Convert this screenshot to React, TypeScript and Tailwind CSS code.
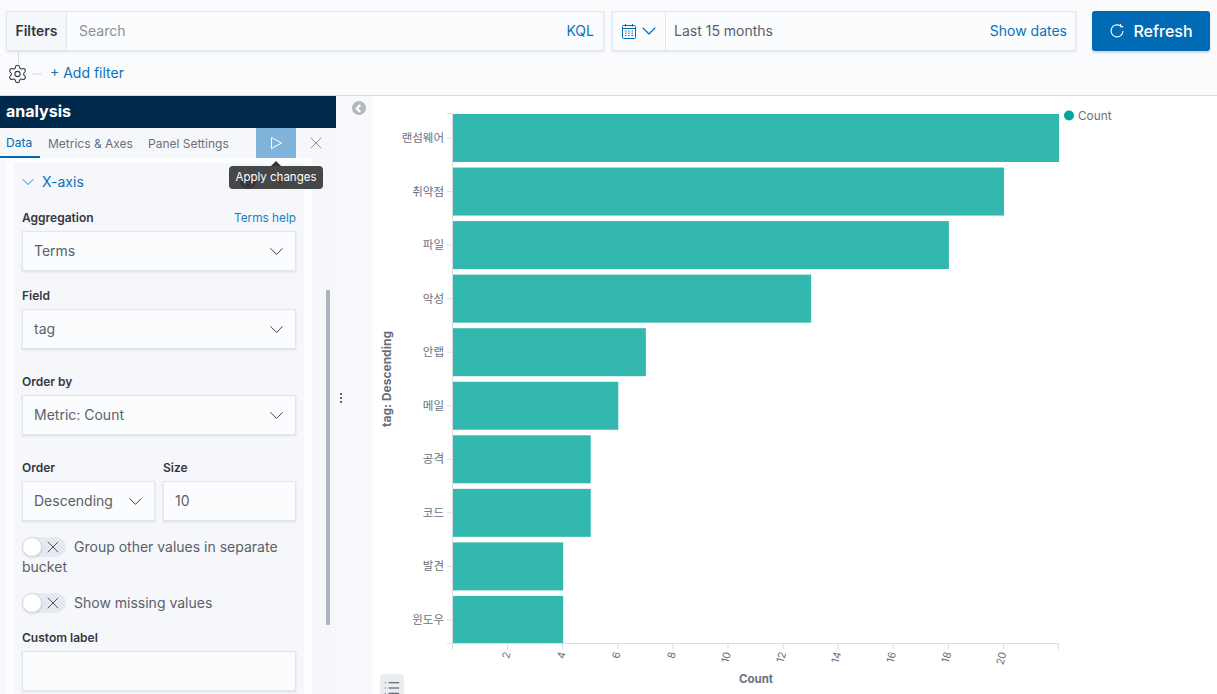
import { ChevronDown, Eye, List, Settings, X } from "lucide-react";

const FONT = "Inter, 'Noto Sans CJK KR', sans-serif";

const bars = [
  { label: "랜섬웨어", count: 22 },
  { label: "취약점", count: 20 },
  { label: "파일", count: 18 },
  { label: "악성", count: 13 },
  { label: "안랩", count: 7 },
  { label: "메일", count: 6 },
  { label: "공격", count: 5 },
  { label: "코드", count: 5 },
  { label: "발견", count: 4 },
  { label: "윈도우", count: 4 },
];

const ticks = [2, 4, 6, 8, 10, 12, 14, 16, 18, 20];

function CalendarIcon() {
  return (
    <svg width="16" height="16" viewBox="0 0 16 16" fill="none" stroke="#006bb4" strokeWidth="1">
      <rect x="1.5" y="2.5" width="13" height="13" rx="1" />
      <path d="M1.5 5.5h13M4.5 1v2.5M11.5 1v2.5" />
      <path d="M4 8h1.5M7.2 8h1.5M10.5 8H12M4 10.2h1.5M7.2 10.2h1.5M10.5 10.2H12M4 12.5h1.5M7.2 12.5h1.5M10.5 12.5H12" />
    </svg>
  );
}

function RefreshIcon() {
  return (
    <svg width="16" height="16" viewBox="0 0 16 16" fill="none" stroke="#fff" strokeWidth="1.1">
      <path d="M11.5 3a6 6 0 1 0 2.5 5" />
      <path d="M11.7 1v2.6H14.2" />
    </svg>
  );
}

function FieldLabel({ children }: { children: React.ReactNode }) {
  return <span className="text-xs font-semibold leading-4 text-[#343741]">{children}</span>;
}

function Select({ value, className = "" }: { value: string; className?: string }) {
  return (
    <div
      className={`flex h-10 items-center justify-between border border-[#e3e6ec] bg-[#fbfcfd] pl-[11px] pr-[7px] text-sm text-[#5a606b] shadow-[0_1px_2px_rgba(152,162,179,0.3)] ${className}`}
    >
      <span>{value}</span>
      <ChevronDown size={23} strokeWidth={1} className="text-[#343741]" />
    </div>
  );
}

function Toggle({ children }: { children: React.ReactNode }) {
  return (
    <div className="text-sm leading-5 text-[#5a606b]">
      <span className="relative mr-2 inline-flex h-5 w-11 items-center justify-end rounded-full bg-[#e6e9f0] pr-[3px] align-top">
        <span className="absolute left-0 top-0 h-5 w-5 rounded-full border border-[#d3dae6] bg-white shadow-sm" />
        <X size={20} strokeWidth={1} className="text-[#343741]" />
      </span>
      {children}
    </div>
  );
}

function Chart() {
  const unit = 27.55;
  return (
    <svg width="845" height="598" viewBox="372 96 845 598" className="block">
      {bars.map((b, i) => {
        const y = 114 + i * 53.55;
        return (
          <g key={b.label}>
            <rect x="453" y={y} width={b.count * unit} height="48" fill="#32b8ae" />
            <line x1="447" x2="452" y1={y + 24} y2={y + 24} stroke="#d9dce2" />
            <text x="444" y={y + 28} textAnchor="end" fontSize="11.5" fill="#69707d">
              {b.label}
            </text>
          </g>
        );
      })}
      <path d="M447 113.5h5.5V643.5M447 643.5H1058.5V649.5M452.5 643.5V649.5" fill="none" stroke="#d9dce2" />
      {ticks.map((t) => {
        const x = 452.5 + t * unit;
        return (
          <g key={t}>
            <line x1={x} x2={x} y1="644" y2="649" stroke="#d9dce2" />
            <text
              x={x + 3}
              y="653"
              textAnchor="end"
              fontSize="10.5"
              fill="#69707d"
              transform={`rotate(-75 ${x + 3} 653)`}
            >
              {t}
            </text>
          </g>
        );
      })}
      <text x="756" y="683" textAnchor="middle" fontSize="11.5" fontWeight="700" fill="#69707d">
        Count
      </text>
      <text
        x="391"
        y="379"
        textAnchor="middle"
        fontSize="12"
        fontWeight="700"
        fill="#69707d"
        transform="rotate(-90 391 379)"
      >
        tag: Descending
      </text>
      <circle cx="1069" cy="115.5" r="5" fill="#00a69b" />
      <text x="1078" y="120" fontSize="11.8" fill="#69707d">
        Count
      </text>
    </svg>
  );
}

export default function App() {
  return (
    <div className="flex h-[694px] w-[1217px] flex-col overflow-hidden bg-[#fafbfd]" style={{ fontFamily: FONT }}>
      <header className="h-24 shrink-0 border-b border-[#d8dce8]">
        <div className="flex items-stretch pl-1.5 pt-[11px]">
          <div className="flex h-10 w-[598px] border border-[#e3e6ec] bg-[#fbfcfd] text-sm shadow-[0_1px_2px_rgba(152,162,179,0.3)]">
            <div className="flex w-[60px] items-center justify-center border-r border-[#e3e6ec] bg-[#f5f7fa] font-semibold text-[#343741]">
              Filters
            </div>
            <div className="flex flex-1 items-center justify-between pl-3 pr-[9px]">
              <span className="text-[#8a8f9a]">Search</span>
              <span className="text-[#0b72b9]">KQL</span>
            </div>
          </div>
          <div className="ml-2 flex h-10 w-[464px] border border-[#e3e6ec] bg-[#fbfcfd] text-sm shadow-[0_1px_2px_rgba(152,162,179,0.3)]">
            <div className="flex w-[53px] items-center border-r border-[#e3e6ec] pl-2">
              <CalendarIcon />
              <ChevronDown size={24} strokeWidth={1.1} className="text-[#006bb4]" />
            </div>
            <div className="flex flex-1 items-center justify-between pl-2 pr-2">
              <span className="text-[#5a606b]">Last 15 months</span>
              <span className="text-[#0b72b9]">Show dates</span>
            </div>
          </div>
          <button className="ml-4 flex h-10 w-[118px] items-center justify-center gap-2 rounded-[3px] bg-[#006bb4] text-base font-medium text-white shadow-[0_2px_2px_rgba(152,162,179,0.4)]">
            <RefreshIcon />
            Refresh
          </button>
        </div>
        <div className="relative flex items-center pl-[7px] pt-[11px] text-sm">
          <span className="absolute left-[18px] top-0 h-3 w-px bg-[#d3dae6]" />
          <Settings size={21} strokeWidth={1.2} className="translate-y-[1.5px] text-[#343741]" />
          <span className="ml-[4px] h-px w-[10px] translate-y-[1.5px] bg-[#d3dae6]" />
          <span className="ml-[8px] text-[#0b72b9]">+ Add filter</span>
        </div>
      </header>

      <main className="flex min-h-0 flex-1">
        <aside className="relative flex w-[336px] shrink-0 flex-col bg-[#f5f7fa]">
          <div className="flex h-8 shrink-0 items-center bg-[#002a4c] pb-0.5 pl-1.5 text-base font-bold text-white">
            analysis
          </div>
          <div className="flex h-[30px] shrink-0 items-stretch whitespace-nowrap text-xs text-[#69707d]">
            <div className="flex w-10 items-center border-b-2 border-[#006bb4] pl-1.5 pt-0.5 text-[#006bb4]">Data</div>
            <div className="ml-2 flex w-[84px] items-center pt-0.5">Metrics &amp; Axes</div>
            <div className="ml-4 flex w-[81px] items-center pt-0.5">Panel Settings</div>
            <div className="ml-[27px] flex w-10 items-center justify-center bg-[#7fb3d9]">
              <svg width="16" height="16" viewBox="0 0 16 16" fill="none" stroke="#fff" strokeWidth="1">
                <path d="M3.5 2.5v11l10-5.5z" />
              </svg>
            </div>
            <div className="flex w-10 items-center justify-center">
              <X size={20} strokeWidth={0.9} className="text-[#69707d]" />
            </div>
          </div>

          <div className="ml-1.5 h-full w-[306px] bg-[#fcfdfe] px-2 pt-[5px]">
            <div className="h-full bg-[#f5f7fa] px-2">
              <div className="flex h-[38px] items-center text-sm text-[#0b72b9]">
                <ChevronDown size={20} strokeWidth={1.1} className="-ml-1" />
                <span className="ml-1">X-axis</span>
                <span className="ml-auto mr-2 flex translate-y-px items-center gap-4">
                  <Eye size={16} strokeWidth={3} className="text-[#111111]" />
                  <X size={16} strokeWidth={1.2} className="text-[#bd271e]" />
                </span>
              </div>

              <div className="mt-[9px] flex h-4 justify-between">
                <FieldLabel>Aggregation</FieldLabel>
                <span className="text-[11.8px] leading-4 text-[#1a7fc4]">Terms help</span>
              </div>
              <Select value="Terms" className="mt-[5px]" />

              <div className="mt-[17px] flex h-4">
                <FieldLabel>Field</FieldLabel>
              </div>
              <Select value="tag" className="mt-[5px]" />

              <div className="mt-[25px] flex h-4">
                <FieldLabel>Order by</FieldLabel>
              </div>
              <Select value="Metric: Count" className="mt-[5px]" />

              <div className="mt-[25px] flex gap-2">
                <div className="flex w-[133px] flex-col">
                  <FieldLabel>Order</FieldLabel>
                  <Select value="Descending" className="mt-[5px]" />
                </div>
                <div className="flex flex-1 flex-col">
                  <FieldLabel>Size</FieldLabel>
                  <div className="mt-[5px] flex h-10 items-center border border-[#e3e6ec] bg-[#fbfcfd] pl-[11px] text-sm text-[#5a606b] shadow-[0_1px_2px_rgba(152,162,179,0.3)]">
                    10
                  </div>
                </div>
              </div>

              <div className="mt-4">
                <Toggle>Group other values in separate bucket</Toggle>
              </div>
              <div className="mt-4">
                <Toggle>Show missing values</Toggle>
              </div>

              <div className="mt-[17px] flex h-4">
                <FieldLabel>Custom label</FieldLabel>
              </div>
              <div className="mt-[5px] h-10 border border-[#e3e6ec] bg-[#fbfcfd] shadow-[0_1px_2px_rgba(152,162,179,0.3)]" />
            </div>
          </div>

          <span className="absolute left-[326px] top-[194px] h-[335px] w-1 bg-[#b0b4c0]" />

          {/* tooltip over the run button */}
          <div className="absolute left-[229px] top-[70px] z-10 flex h-[23px] w-[94px] items-center justify-center rounded-[4px] bg-[#333333]/90 text-[11.5px] text-white">
            <span className="absolute -top-[5px] left-[42px] h-0 w-0 border-x-[5px] border-b-[5px] border-x-transparent border-b-[#333333]" />
            <span className="relative">Apply changes</span>
          </div>
        </aside>

        <div className="flex w-9 shrink-0 flex-col items-center bg-[#f8f9fc] pt-[5px]">
          <div className="ml-[9px] flex h-3.5 w-3.5 items-center justify-center rounded-full bg-[#b4b7bd]">
            <svg width="9" height="9" viewBox="0 0 8 8" fill="none" stroke="#fff" strokeWidth="2">
              <path d="M5.5 1L2.5 4l3 3" />
            </svg>
          </div>
          <div className="ml-[-26px] mt-[278px] flex flex-col gap-[2px]">
            <span className="h-0.5 w-0.5 rounded-full bg-[#343741]" />
            <span className="h-0.5 w-0.5 rounded-full bg-[#343741]" />
            <span className="h-0.5 w-0.5 rounded-full bg-[#343741]" />
          </div>
        </div>

        <section className="relative flex-1 bg-white">
          <Chart />
          <div className="absolute left-2 top-[578px] flex h-6 w-6 items-center justify-center rounded-t-[4px] bg-[#e9ecf1] pt-1">
            <List size={18} strokeWidth={1.2} className="text-[#343741]" />
          </div>
        </section>
      </main>
    </div>
  );
}
